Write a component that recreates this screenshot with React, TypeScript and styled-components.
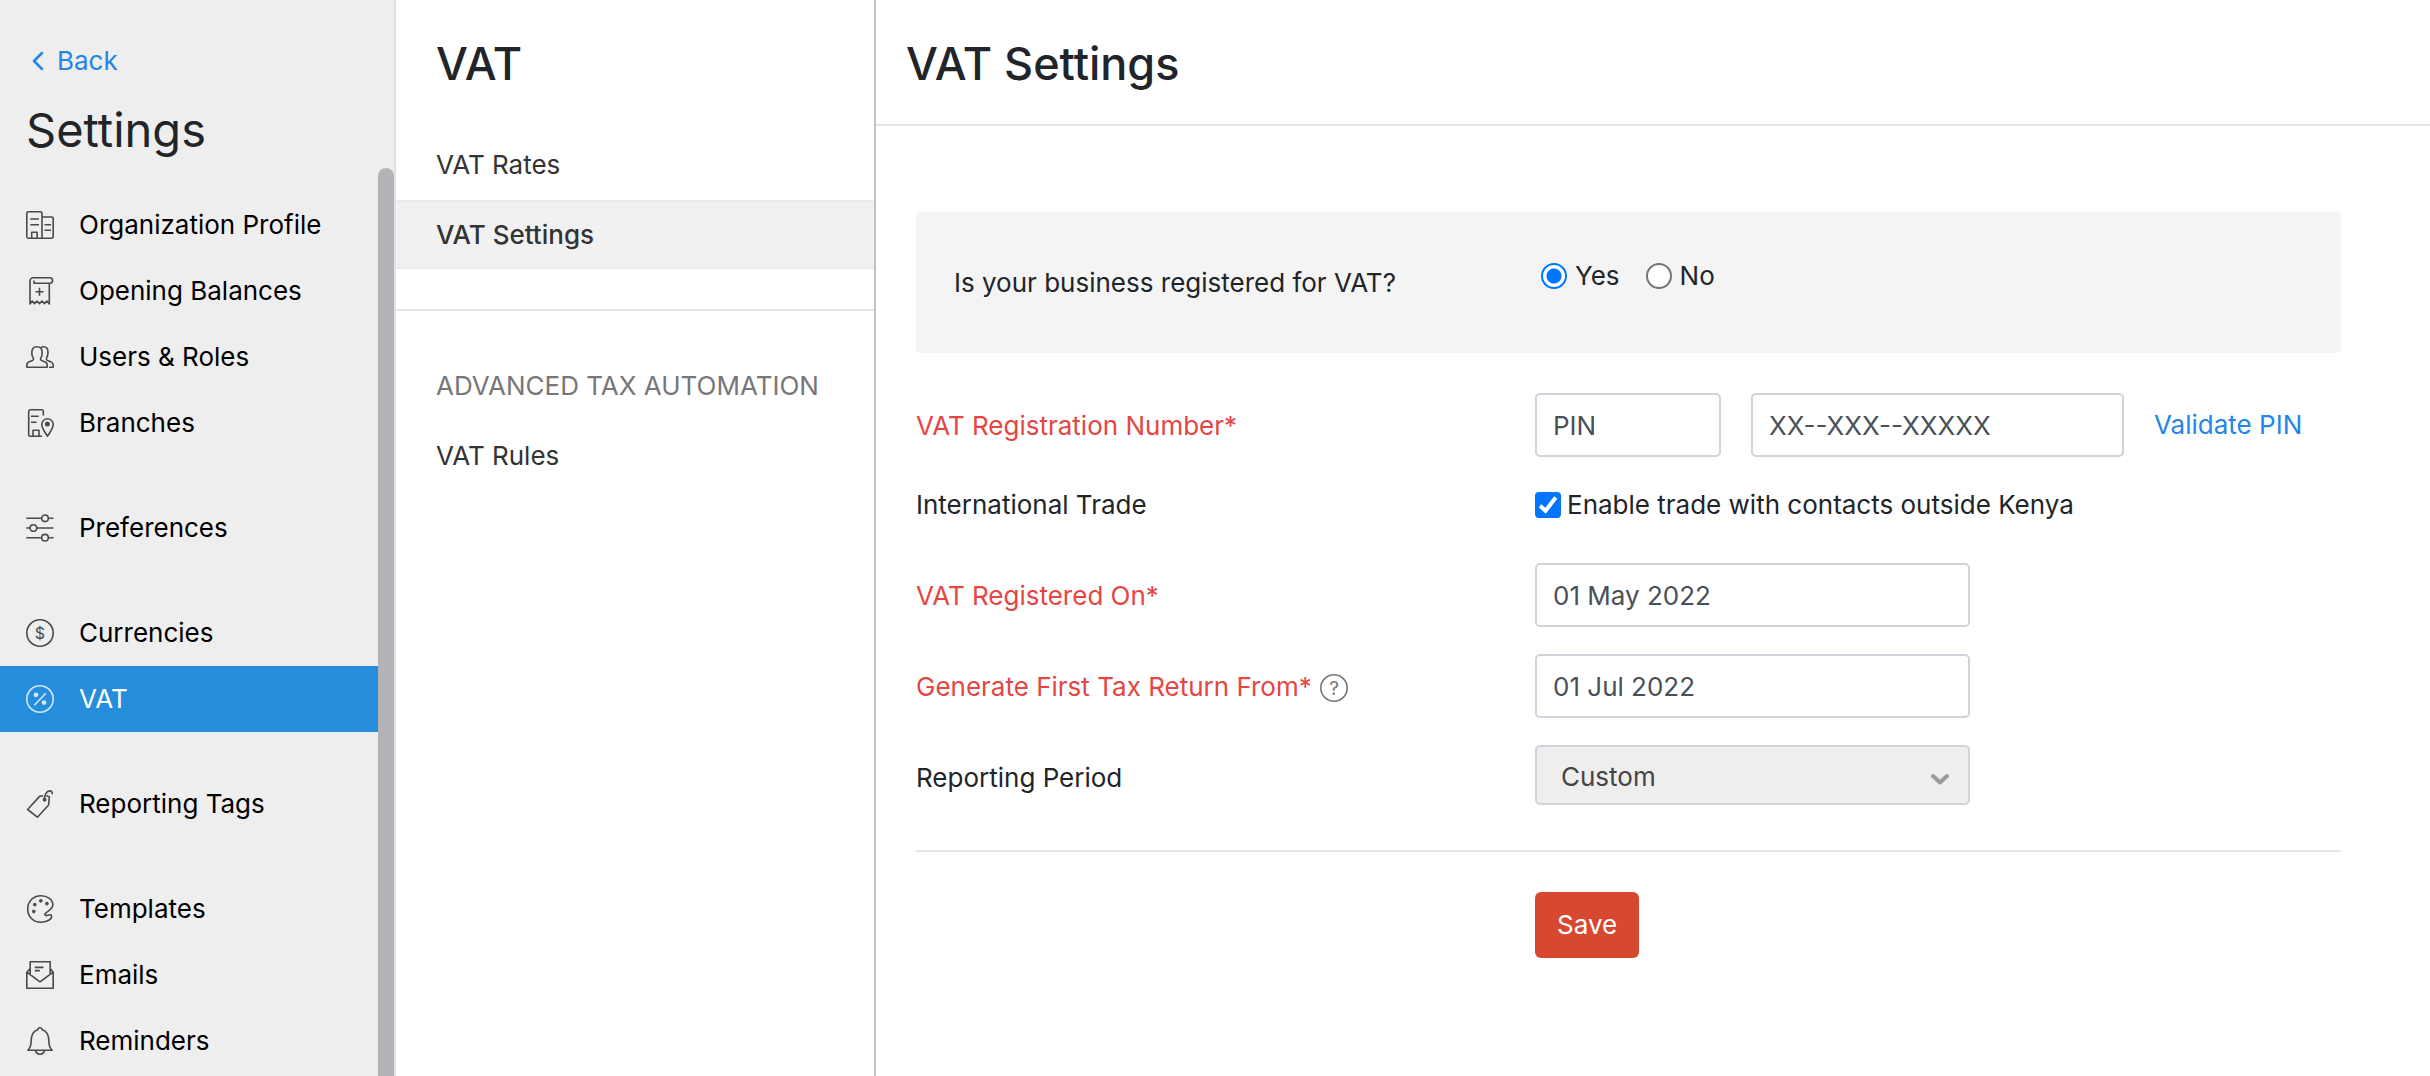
import React from "react";
import styled, { createGlobalStyle, css } from "styled-components";

const GlobalStyle = createGlobalStyle`
  *, *::before, *::after { box-sizing: border-box; }
  body {
    margin: 0;
    background: #fff;
    color: #212529;
    font-family: Inter, "Liberation Sans", sans-serif;
    font-size: 26px;
    line-height: 32px;
  }
  input, select, button { font: inherit; }
  a { text-decoration: none; }
  h1, h2, ul, p { margin: 0; padding: 0; }
  ul { list-style: none; }
`;

const Page = styled.div`
  display: flex;
  min-height: 100vh;
`;

/* ---------- Settings sidebar ---------- */

const Sidebar = styled.aside`
  display: flex;
  flex-direction: column;
  flex: 0 0 396px;
  background: #eee;
  border-right: 2px solid #e2e2e2;
`;

const SidebarHead = styled.header`
  display: flex;
  flex-direction: column;
  gap: 25px;
  padding: 45px 26px 10px;
`;

const BackLink = styled.a`
  display: flex;
  align-items: center;
  gap: 12px;
  padding-left: 6px;
  color: #2485e8;
`;

const SidebarTitle = styled.h1`
  font-size: 47px;
  line-height: 56px;
  font-weight: 400;
`;

const SidebarBody = styled.div`
  display: flex;
  flex: 1;
`;

const NavColumn = styled.nav`
  display: flex;
  flex-direction: column;
  flex: 1;
  gap: 39px;
  padding-top: 24px;
`;

const NavLink = styled.a<{ $active?: boolean }>`
  display: flex;
  align-items: center;
  gap: 25px;
  height: 66px;
  padding-left: 26px;
  color: ${(p) => (p.$active ? "#fff" : "#000")};
  background: ${(p) => (p.$active ? "#268ddd" : "transparent")};

  svg {
    color: ${(p) => (p.$active ? "#d3e6f7" : "#4a4a4a")};
  }
`;

const ScrollThumb = styled.div`
  flex: 0 0 16px;
  background: #b3b3b8;
  border-radius: 8px 8px 0 0;
`;

/* ---------- VAT sub navigation ---------- */

const SubNav = styled.nav`
  display: flex;
  flex-direction: column;
  flex: 0 0 480px;
  border-right: 2px solid #c2c2c2;
`;

const headingText = css`
  font-size: 45px;
  line-height: 56px;
  font-weight: 500;
`;

const SubNavTitle = styled.h2`
  ${headingText}
  padding: 36px 40px 38px;
`;

const SubNavList = styled.ul`
  display: flex;
  flex-direction: column;
  gap: 1px;
`;

const subNavRow = css`
  display: flex;
  align-items: center;
  height: 69px;
  padding: 0 40px;
`;

const SubNavLink = styled.a<{ $active?: boolean }>`
  ${subNavRow}
  color: #333;
  font-weight: ${(p) => (p.$active ? 500 : 400)};
  background: ${(p) => (p.$active ? "#f1f1f1" : "transparent")};
  border: solid ${(p) => (p.$active ? "#ebebeb" : "transparent")};
  border-width: 2px 0;
`;

const SubNavCaption = styled.p`
  ${subNavRow}
  margin-bottom: 1px;
  color: #777;
  text-transform: uppercase;
`;

const SubNavDivider = styled.hr`
  width: 100%;
  height: 2px;
  margin: 40px 0;
  border: 0;
  background: #e4e4e4;
`;

/* ---------- Main panel ---------- */

const Main = styled.main`
  display: flex;
  flex-direction: column;
  flex: 1;
  min-width: 0;
`;

const MainHead = styled.header`
  padding: 36px 30px 32px;
  border-bottom: 2px solid #e4e4e4;
`;

const MainTitle = styled.h1`
  ${headingText}
`;

const Form = styled.form`
  display: flex;
  flex-direction: column;
  padding: 86px 89px 40px 40px;
`;

const Panel = styled.div`
  display: flex;
  align-items: center;
  height: 141px;
  margin-bottom: 40px;
  padding: 0 38px;
  border-radius: 4px;
  background: #f4f4f4;
`;

const PanelQuestion = styled.span`
  flex: 0 0 587px;
`;

const RadioGroup = styled.div`
  display: flex;
  gap: 26px;
  padding-bottom: 14px;
`;

const Choice = styled.label<{ $gap: number }>`
  display: flex;
  align-items: center;
  gap: ${(p) => p.$gap}px;
`;

const Radio = styled.input.attrs({ type: "radio" })`
  appearance: none;
  width: 26px;
  height: 26px;
  margin: 0;
  border: 2px solid #767676;
  border-radius: 50%;
  background: #fff;

  &:checked {
    border-color: #0075ff;
    background: radial-gradient(circle, #0075ff 7px, #fff 8px);
  }
`;

const CheckWrap = styled.span`
  display: grid;
  width: 26px;
  height: 26px;

  > * { grid-area: 1 / 1; }
  svg { pointer-events: none; }
`;

const Checkbox = styled.input.attrs({ type: "checkbox" })`
  appearance: none;
  width: 26px;
  height: 26px;
  margin: 0;
  border: 2px solid #767676;
  border-radius: 4px;

  &:checked {
    border-color: #0075ff;
    background: #0075ff;
  }
`;

const Row = styled.div<{ $compact?: boolean }>`
  display: grid;
  grid-template-columns: 619px 1fr;
  align-items: ${(p) => (p.$compact ? "center" : "start")};
  height: ${(p) => (p.$compact ? 42 : 64)}px;
  margin-bottom: ${(p) => (p.$compact ? 37 : 27)}px;
`;

const LabelCell = styled.div<{ $compact?: boolean }>`
  display: flex;
  align-items: center;
  gap: 8px;
  height: ${(p) => (p.$compact ? 42 : 65)}px;
`;

const FieldLabel = styled.label<{ $required?: boolean }>`
  color: ${(p) => (p.$required ? "#e54643" : "#212529")};
`;

const HelpButton = styled.button`
  display: flex;
  padding: 2px 0 0;
  border: 0;
  background: none;
  color: #777;
`;

const Controls = styled.div`
  display: flex;
  align-items: center;
  gap: 30px;
`;

const TextInput = styled.input<{ $width: number }>`
  width: ${(p) => p.$width}px;
  height: 64px;
  padding: 0 16px;
  border: 2px solid #ced4da;
  border-radius: 5px;
  background: #fff;
  color: #495057;
`;

const TextLink = styled.a`
  color: #2485e8;
`;

const SelectWrap = styled.div`
  position: relative;
  width: 435px;

  svg {
    position: absolute;
    right: 20px;
    top: 28px;
    pointer-events: none;
  }
`;

const Select = styled.select`
  appearance: none;
  display: block;
  width: 100%;
  height: 60px;
  padding: 3px 24px 0;
  border: 2px solid #ced4da;
  border-radius: 5px;
  background: #eee;
  color: #444;
  opacity: 1;
`;

const Footer = styled.footer`
  margin-top: 14px;
  padding: 40px 0 0 619px;
  border-top: 2px solid #e4e4e4;
`;

const SaveButton = styled.button`
  display: block;
  height: 66px;
  padding: 0 22px;
  border: 0;
  border-radius: 6px;
  background: #d64830;
  color: #fff;
`;

/* ---------- Icons, drawn on a 28 unit grid ---------- */

function Icon({ children }: { children: React.ReactNode }) {
  return (
    <svg
      width="28"
      height="28"
      viewBox="0 0 28 28"
      fill="none"
      stroke="currentColor"
      strokeWidth="1.6"
      strokeLinejoin="round"
      aria-hidden="true"
    >
      {children}
    </svg>
  );
}

const OrganizationIcon = (
  <Icon>
    <path d="M16 27.2H2.2A1.5 1.5 0 0 1 .8 25.8V2.3A1.5 1.5 0 0 1 2.3.8h12.2A1.5 1.5 0 0 1 16 2.3ZM16 6h9.7a1.5 1.5 0 0 1 1.5 1.5v18.2a1.5 1.5 0 0 1-1.5 1.5H16" />
    <path d="M4.3 8H13M4.3 13.7H13M18.5 13.7H25M18.5 19.3H25M5.7 27v-5.7h5.4V27" />
  </Icon>
);

const ReceiptIcon = (
  <Icon>
    <path d="M23.3 6.3V27l-2.4-3-2.5 2.6L16 24l-2.5 2.6L11 24l-2.5 2.6L6.2 24 4 27V4A3.2 3.2 0 0 1 7.2.8h16.600a2.400 2.400 0 0 1 0 5.500H8V3.400" />
    <path d="M13.500 10.800v8M9.500 14.800h8" />
  </Icon>
);

const UsersIcon = (
  <Icon>
    <path d="M.8 24.200v-2.300c0-1.700 1-2.600 2.600-3.200l3-1.200c1-.4 1.300-1 1.100-2-.9-1.300-1.700-2.700-1.700-5.500 0-4 1.900-6.200 5.200-6.200s5.200 2.200 5.200 6.200c0 2.800-.8 4.200-1.700 5.500-.2 1 .1 1.600 1.100 2l3 1.200c1.600.6 2.600 1.500 2.600 3.200v2.300Z" />
    <path d="M15 4.500c.8-.5 1.700-.7 2.700-.7 3 0 4.300 2 4.300 5.600 0 3-.8 4.600-1.600 6-.2 1 .1 1.600 1.100 2l3.100 1.300c1.600.7 2.600 1.500 2.600 3.200v2.300H23" />
  </Icon>
);

const BranchesIcon = (
  <Icon>
    <path d="M17.300 6.500V2.300A1.500 1.500 0 0 0 15.800.8H4.200a1.500 1.500 0 0 0-1.500 1.500v23.400a1.500 1.500 0 0 0 1.500 1.500h12M5 7.200h7.600M5 13.300h5.600M7 27v-5.800h6V27" />
    <path d="M21.500 27.200c-2.500-4.200-5.700-7.700-5.700-11.700a5.700 5.700 0 0 1 11.400 0c0 4-3.200 7.500-5.700 11.700Z" />
    <circle cx="21.400" cy="15" r="1.700" fill="currentColor" />
  </Icon>
);

const PreferencesIcon = (
  <Icon>
    <path d="M.3 4.300h15.200M22.600 4.300h4.900M.3 14h3.600M10.900 14h16.600M.3 23.700h15.200M22.600 23.700h4.900" />
    <circle cx="19" cy="4.300" r="3.300" />
    <circle cx="7.400" cy="14" r="3.300" />
    <circle cx="19" cy="23.700" r="3.300" />
  </Icon>
);

const CurrencyIcon = (
  <Icon>
    <circle cx="14" cy="14" r="13.200" />
    <text x="14" y="19.500" fontSize="16" textAnchor="middle" fill="currentColor" stroke="none">
      $
    </text>
  </Icon>
);

const PercentIcon = (
  <Icon>
    <circle cx="14" cy="14" r="13.200" />
    <path d="M8.300 20.200 19.800 8.200" />
    <circle cx="10" cy="9.800" r="1.600" fill="currentColor" />
    <circle cx="18" cy="17.600" r="1.600" fill="currentColor" />
  </Icon>
);

const TagIcon = (
  <Icon>
    <path d="M17.200 5.800 13.600 6.400 1.600 19.500l9.800 7.700L22.600 15l.7-8.300-3-.9" />
    <path d="M18.600 10c-.4-4.800 1.500-8.800 5-9.100 2-.1 2.900 1 2.700 3.300" />
    <circle cx="18.600" cy="9.800" r="1.200" fill="currentColor" />
  </Icon>
);

const PaletteIcon = (
  <Icon>
    <path d="M14.800.8c6.700 0 12.100 3.600 12.100 9 0 5.300-7.500 6.500-8 9.600-.2 1.300 1.200 1.500 2.500.9 2-1 4.200-.8 4.200 1.200 0 3.300-5.500 5.700-10.800 5.700C7.300 27.200 1.700 21.600 1.700 14S7.300.8 14.800.8Z" />
    <g fill="currentColor" strokeWidth="1">
      <circle cx="14.800" cy="5.800" r="1.400" />
      <circle cx="8.800" cy="9.600" r="1.400" />
      <circle cx="20.900" cy="8.600" r="1.400" />
      <circle cx="7.800" cy="16.500" r="1.400" />
    </g>
  </Icon>
);

const MailIcon = (
  <Icon>
    <path d="M4.200 14V.8h20V14M4.200 7.500.8 11.200v16h26.400v-16l-3-3.700M.8 11.200 14 20.800l13.200-9.600M8.800 6.400h8.700M8.800 9.600h5" />
  </Icon>
);

const BellIcon = (
  <Icon>
    <path d="M1.800 23.300c2.400-2.400 3.300-5 3.300-8.600 0-6.500 2-10.700 6.700-11.900.2-1.300 1-2 2.200-2s2 .7 2.200 2c4.700 1.200 6.700 5.400 6.700 11.900 0 3.600.9 6.200 3.300 8.600Z" />
    <path d="M9.700 23.500c.4 2.400 2 3.700 4.300 3.700s3.900-1.300 4.300-3.700" />
  </Icon>
);

const HelpIcon = (
  <Icon>
    <circle cx="14" cy="14" r="13.200" />
    <text x="14" y="20.500" fontSize="19" textAnchor="middle" fill="currentColor" stroke="none">
      ?
    </text>
  </Icon>
);

/* ---------- Data ---------- */

type NavEntry = { label: string; icon: React.ReactNode; active?: boolean };

const navGroups: NavEntry[][] = [
  [
    { label: "Organization Profile", icon: OrganizationIcon },
    { label: "Opening Balances", icon: ReceiptIcon },
    { label: "Users & Roles", icon: UsersIcon },
    { label: "Branches", icon: BranchesIcon },
  ],
  [{ label: "Preferences", icon: PreferencesIcon }],
  [
    { label: "Currencies", icon: CurrencyIcon },
    { label: "VAT", icon: PercentIcon, active: true },
  ],
  [{ label: "Reporting Tags", icon: TagIcon }],
  [
    { label: "Templates", icon: PaletteIcon },
    { label: "Emails", icon: MailIcon },
    { label: "Reminders", icon: BellIcon },
  ],
];

export default function App() {
  return (
    <>
      <GlobalStyle />
      <Page>
        <Sidebar>
          <SidebarHead>
            <BackLink href="#back">
              <svg width="13" height="20" viewBox="0 0 13 20" fill="none" aria-hidden="true">
                <path
                  d="M10 2 2 10l8 8"
                  stroke="currentColor"
                  strokeWidth="2.500"
                  strokeLinecap="round"
                  strokeLinejoin="round"
                />
              </svg>
              Back
            </BackLink>
            <SidebarTitle>Settings</SidebarTitle>
          </SidebarHead>
          <SidebarBody>
            <NavColumn aria-label="Settings">
              {navGroups.map((group) => (
                <ul key={group[0].label}>
                  {group.map((item) => (
                    <li key={item.label}>
                      <NavLink href="#settings" $active={item.active}>
                        {item.icon}
                        {item.label}
                      </NavLink>
                    </li>
                  ))}
                </ul>
              ))}
            </NavColumn>
            <ScrollThumb />
          </SidebarBody>
        </Sidebar>

        <SubNav aria-label="VAT">
          <SubNavTitle>VAT</SubNavTitle>
          <SubNavList>
            <li>
              <SubNavLink href="#rates">VAT Rates</SubNavLink>
            </li>
            <li>
              <SubNavLink href="#vat-settings" $active>
                VAT Settings
              </SubNavLink>
            </li>
          </SubNavList>
          <SubNavDivider />
          <SubNavCaption>Advanced Tax Automation</SubNavCaption>
          <SubNavLink href="#rules">VAT Rules</SubNavLink>
        </SubNav>

        <Main>
          <MainHead>
            <MainTitle>VAT Settings</MainTitle>
          </MainHead>
          <Form onSubmit={(e) => e.preventDefault()}>
            <Panel role="radiogroup" aria-labelledby="registered">
              <PanelQuestion id="registered">Is your business registered for VAT?</PanelQuestion>
              <RadioGroup>
                <Choice $gap={8}>
                  <Radio name="registered" defaultChecked />
                  Yes
                </Choice>
                <Choice $gap={8}>
                  <Radio name="registered" />
                  No
                </Choice>
              </RadioGroup>
            </Panel>

            <Row>
              <LabelCell>
                <FieldLabel $required htmlFor="vat-number">
                  VAT Registration Number*
                </FieldLabel>
              </LabelCell>
              <Controls>
                <TextInput $width={186} aria-label="Number type" defaultValue="PIN" />
                <TextInput $width={373} id="vat-number" defaultValue="XX--XXX--XXXXX" />
                <TextLink href="#validate">Validate PIN</TextLink>
              </Controls>
            </Row>

            <Row $compact>
              <LabelCell $compact>
                <FieldLabel htmlFor="trade">International Trade</FieldLabel>
              </LabelCell>
              <Choice $gap={6}>
                <CheckWrap>
                  <Checkbox id="trade" defaultChecked />
                  <svg width="26" height="26" viewBox="0 0 26 26" fill="none" aria-hidden="true">
                    <path d="M5 13.800l5.500 5L20.800 5.500" stroke="#fff" strokeWidth="4" />
                  </svg>
                </CheckWrap>
                Enable trade with contacts outside Kenya
              </Choice>
            </Row>

            <Row>
              <LabelCell>
                <FieldLabel $required htmlFor="registered-on">
                  VAT Registered On*
                </FieldLabel>
              </LabelCell>
              <TextInput $width={435} id="registered-on" defaultValue="01 May 2022" />
            </Row>

            <Row>
              <LabelCell>
                <FieldLabel $required htmlFor="first-return">
                  Generate First Tax Return From*
                </FieldLabel>
                <HelpButton type="button" aria-label="Help">
                  {HelpIcon}
                </HelpButton>
              </LabelCell>
              <TextInput $width={435} id="first-return" defaultValue="01 Jul 2022" />
            </Row>

            <Row>
              <LabelCell>
                <FieldLabel htmlFor="period">Reporting Period</FieldLabel>
              </LabelCell>
              <SelectWrap>
                <Select id="period" disabled defaultValue="Custom">
                  <option>Custom</option>
                </Select>
                <svg width="20" height="13" viewBox="0 0 20 13" fill="none" aria-hidden="true">
                  <path
                    d="M3 3l7 6.500L17 3"
                    stroke="#999"
                    strokeWidth="4"
                    strokeLinecap="round"
                    strokeLinejoin="round"
                  />
                </svg>
              </SelectWrap>
            </Row>

            <Footer>
              <SaveButton type="submit">Save</SaveButton>
            </Footer>
          </Form>
        </Main>
      </Page>
    </>
  );
}
